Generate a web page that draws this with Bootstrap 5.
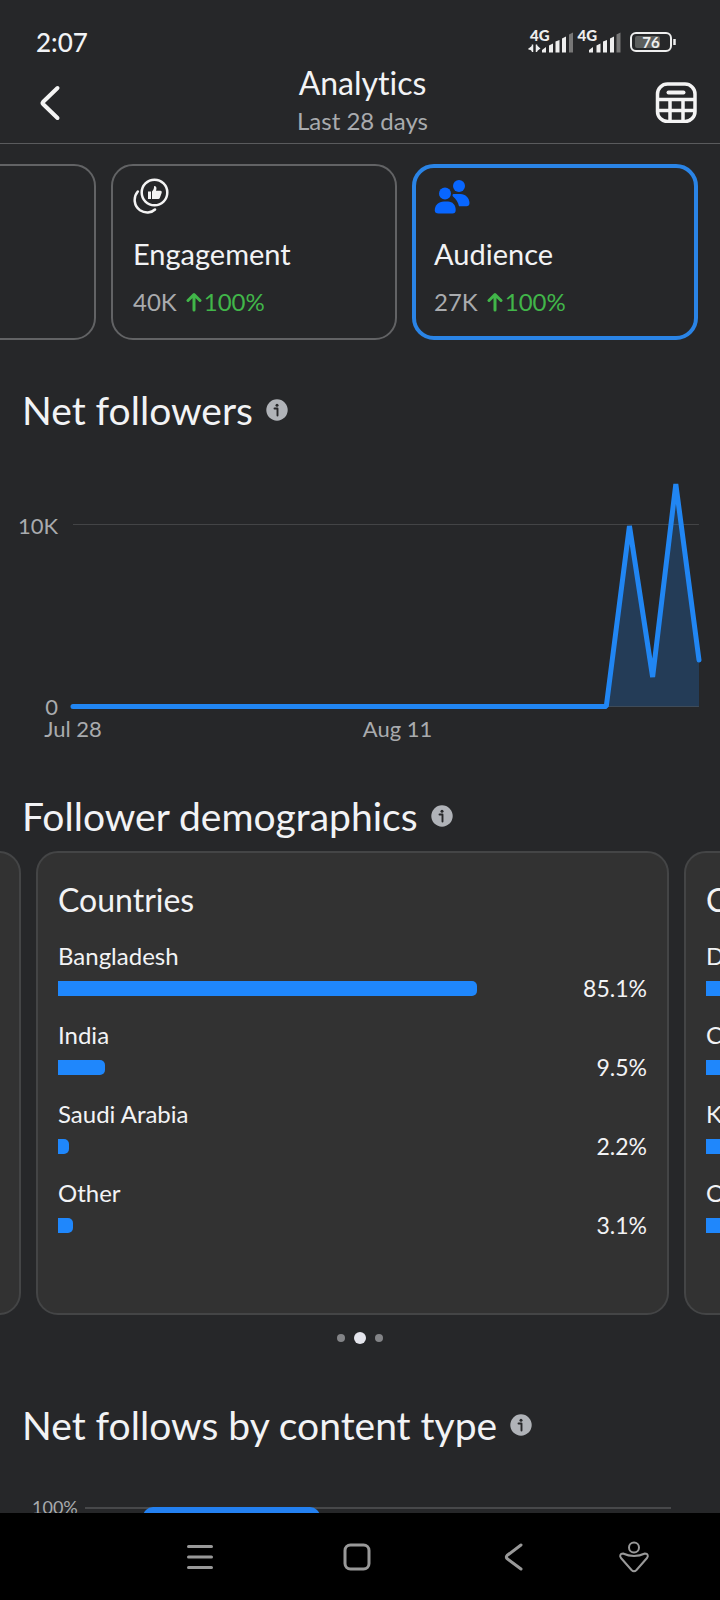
<!DOCTYPE html>
<html lang="en">
<head>
<meta charset="utf-8">
<meta name="viewport" content="width=device-width, initial-scale=1">
<title>Analytics</title>
<link href="https://cdn.jsdelivr.net/npm/bootstrap@5.3.0/dist/css/bootstrap.min.css" rel="stylesheet">
<style>
  body { background: #262729; color: #f2f3f5; font-family: Lato, "Noto Sans", sans-serif; font-variant-ligatures: none; }
  button { background: none; border: 0; padding: 0; color: inherit; text-align: left; }
  svg { display: block; }
  .muted { color: #a9abae; }
  .status-bar { height: 64px; padding: 20px 44px 0 36px; }
  .clock { font-size: 26px; line-height: 44px; font-weight: 500; }
  .app-header { display: grid; grid-template-columns: 56px 1fr 56px; padding: 0 23px 3px 28px; border-bottom: 1px solid #5a5b5d; }
  .app-title { font-size: 32px; line-height: 38px; }
  .app-sub { font-size: 24px; line-height: 38px; }

  .metric-strip { padding: 20px 22px 0 0; gap: 15px; overflow: hidden; }
  .metric { flex: 0 0 286px; min-height: 176px; border: 2px solid #626365; border-radius: 22px; padding: 12px 20px 20px; }
  .metric.active { border: 4px solid #2a84e6; padding: 10px 18px 18px; }
  .metric-name { font-size: 29px; line-height: 36px; margin-top: 22px; }
  .metric-value { font-size: 24px; line-height: 32px; margin-top: 14px; gap: 9px; }
  .up { color: #41b649; gap: 2px; }

  .section-title { font-size: 39px; line-height: 40px; font-weight: 400; margin: 0; }
  .section-head { padding: 50px 0 0 22px; gap: 13px; }
  .section-head.roomy { padding-top: 56px; }
  .section-head.roomier { padding-top: 61px; }
  .axis-text { font-size: 22px; line-height: 22px; }
  .plot { margin-right: 21px; }
  .y-axis { width: 73px; padding: 45px 15px 0 0; height: 248px; }
  .x-axis { margin: -2px 21px 0 73px; }
  .tick { width: 0; white-space: nowrap; }

  .carousel-row { gap: 15px; margin-top: 15px; overflow: hidden; }
  .demo-card { flex: 0 0 calc(100% - 87px); background: #323232; border: 2px solid #444546; border-radius: 22px; padding: 29px 20px 71px; }
  .demo-card.previous { flex-basis: 60px; margin-left: -39px; }
  .demo-title { font-size: 32px; line-height: 36px; font-weight: 400; margin: 0 0 22px; }
  .demo-list { gap: 15px; padding-bottom: 1px; }
  .demo-label { font-size: 24px; line-height: 32px; }
  .demo-bar { height: 32px; }
  .demo-value { width: 97px; font-size: 23px; line-height: 32px; }
  .bar { height: 15px; background: #1f87fc; border-radius: 0 5px 5px 0; }
  .dots { height: 12px; margin-top: 17px; gap: 9px; }
  .dot { width: 8px; height: 8px; border-radius: 50%; background: #838487; }
  .dot.on { width: 12px; height: 12px; background: #e4e5ec; }

  .type-chart { padding: 0 49px 0 32px; margin-top: 50px; gap: 8px; }
  .type-label { font-size: 18px; line-height: 24px; width: 45px; }
  .type-plot { border-top: 2px solid #47484a; margin-top: 12px; height: 240px; }
  .type-bar { width: 177px; height: 240px; margin: -2px 0 0 58px; border-radius: 10px 10px 0 0; background: #2380f0; }
  .system-nav { background: #000; height: 87px; position: relative; z-index: 1; padding: 0 70px 0 184px; }
  .nav-keys { gap: 125px; }
</style>
</head>
<body>
<svg width="0" height="0" class="position-absolute" aria-hidden="true">
  <symbol id="info" viewBox="0 0 22 22"><circle cx="11" cy="11" r="10.700" fill="#b0b3b8"/><circle cx="11" cy="6.200" r="1.500" fill="#262729"/><path d="M8.500 9.500h3V16.500" fill="none" stroke="#262729" stroke-width="1.900" stroke-linecap="round" stroke-linejoin="round"/></symbol>
  <symbol id="arrow" viewBox="0 0 16 20"><path d="M8 18V3M2 8.500L8 2.500l6 6" fill="none" stroke="#41b649" stroke-width="3" stroke-linecap="round" stroke-linejoin="round"/></symbol>
</svg>

<div class="vh-100 d-flex flex-column overflow-hidden">
  <div class="status-bar d-flex justify-content-between align-items-center flex-shrink-0">
    <div class="clock">2:07</div>
    <svg width="150" height="32" viewBox="526 26 150 32" role="img" aria-label="Signal and battery" font-family="Lato, sans-serif">
      <g fill="#eee">
        <text x="530" y="41" font-size="15" font-weight="900">4G</text>
        <path d="M528.500 49h4zM532.500 44.500v7.500M536.500 44.500v7.500" stroke="#eee" stroke-width="1.500"/>
        <path d="M528.500 48.500l4-3v6zM536.500 45l4 3.500-4 3zM542 52.500v-2.500l4-3v5.500zM549 52.500v-7l4-2v9zM555.500 52.500v-11l4-1.500v12.500zM562 52.500v-14l4-2v16z"/>
        <path fill="#777" d="M569 52.500v-18l4-2v20z"/>
        <text x="577.500" y="41" font-size="15" font-weight="900">4G</text>
        <path d="M589 52.500v-2.500l4-3v5.500zM596.500 52.500v-7l4-2v9zM603 52.500v-11l4-1.500v12.500zM610 52.500v-14l4-2v16z"/>
        <path fill="#777" d="M616.500 52.500v-18l4-2v20z"/>
      </g>
      <rect x="631" y="33" width="40" height="18" rx="5" fill="none" stroke="#eee" stroke-width="2"/>
      <rect x="635" y="36" width="25" height="12" rx="2" fill="#5c5e5d"/>
      <path d="M674.500 39v6" stroke="#eee" stroke-width="2.500"/>
      <text x="651" y="47.500" font-size="15" font-weight="700" fill="#eee" text-anchor="middle">76</text>
    </svg>
  </div>

  <header class="app-header flex-shrink-0">
    <button type="button" aria-label="Back" class="d-flex align-items-center">
      <svg width="44" height="44" viewBox="0 0 44 44"><path d="M29.500 8L15 22a1.500 1.500 0 0 0 0 2L29.500 38" fill="none" stroke="#f4f4f4" stroke-width="4" stroke-linecap="round"/></svg>
    </button>
    <div class="text-center">
      <div class="app-title">Analytics</div>
      <div class="app-sub muted">Last 28 days</div>
    </div>
    <button type="button" aria-label="Choose date range" class="d-flex align-items-center justify-content-end">
      <svg width="42" height="42" viewBox="0 0 42 42" fill="none" stroke="#f4f4f4"><rect x="2.500" y="3" width="37.500" height="37.500" rx="10" stroke-width="3.500"/><path d="M13.500 11.500h15" stroke-width="4" stroke-linecap="round"/><path d="M2 18.500h38M2 29.500h38M15 18.500V40M28 18.500V40" stroke-width="3.500"/></svg>
    </button>
  </header>

  <main class="flex-grow-1 overflow-hidden">
    <div class="metric-strip d-flex justify-content-end">
      <div class="metric"></div>
      <button type="button" class="metric">
        <svg width="36" height="36" viewBox="0 0 36 36"><circle cx="21.500" cy="14.500" r="12.800" fill="none" stroke="#f4f4f4" stroke-width="2.500"/><path d="M4.800 13.500C-.2 19.500 1 28 7 32.200C12 35.500 18.500 35 22 31.500" fill="none" stroke="#f4f4f4" stroke-width="2.500" stroke-linecap="round"/><path fill="#f4f4f4" d="M15 13.500h3v7.500h-3zM19 13.500c1.700-1.500 2-3.500 2.200-5.500 2.300 0 2.800 2.300 1.800 4.800h4.300c1.500 0 1.700 1.400 1.200 2.500l-1.600 4.500c-.3.800-.9 1.200-1.700 1.200H19z"/></svg>
        <div class="metric-name">Engagement</div>
        <div class="metric-value d-flex"><span class="muted">40K</span><span class="up d-flex align-items-center"><svg width="16" height="20"><use href="#arrow"/></svg>100%</span></div>
      </button>
      <button type="button" class="metric active">
        <svg width="36" height="36" viewBox="0 0 36 36" fill="#0866ff"><circle cx="25" cy="8" r="6"/><path d="M19.500 16h7c5 0 9 4 9 9 0 2.300-1.200 3.200-3 3.200H25c-1-4-3-7.500-6-9.700-.8-1-.6-2.500.5-2.500z"/><circle cx="11" cy="15.500" r="6"/><path d="M10 23.500h4c4.500 0 7.700 3.500 7.700 8.500 0 2.500-1.200 3.500-3.200 3.500H4.500C2 35.500.8 34.300.8 32.200.8 27 4.500 23.500 10 23.500z"/></svg>
        <div class="metric-name">Audience</div>
        <div class="metric-value d-flex"><span class="muted">27K</span><span class="up d-flex align-items-center"><svg width="16" height="20"><use href="#arrow"/></svg>100%</span></div>
      </button>
    </div>

    <section>
      <div class="section-head d-flex align-items-center">
        <h2 class="section-title">Net followers</h2>
        <button type="button" aria-label="About net followers"><svg width="22" height="22"><use href="#info"/></svg></button>
      </div>
      <div class="d-flex plot mt-4 pt-3">
        <div class="y-axis axis-text muted text-end d-flex flex-column justify-content-between flex-shrink-0"><span>10K</span><span>0</span></div>
        <!-- One unit of x is one day of the 28-day range -->
        <svg class="flex-grow-1 overflow-visible" height="250" viewBox="0 0 27 250" preserveAspectRatio="none" width="100" role="img" aria-label="Net followers by day">
          <path d="M0 54.500H27M0 236.500H27" stroke="#434446" stroke-width="1" vector-effect="non-scaling-stroke"/>
          <path d="M23 236.500L24 56 25 207 26 14 27 190V236.500z" fill="#1f87fc" fill-opacity=".22"/>
          <path d="M0 236.500H23L24 56 25 207 26 14 27 190" fill="none" stroke="#2186f3" stroke-width="5" stroke-linecap="round" stroke-linejoin="bevel" vector-effect="non-scaling-stroke"/>
        </svg>
      </div>
      <div class="x-axis axis-text muted d-flex">
        <span class="tick d-flex justify-content-center">Jul 28</span>
        <span class="tick d-flex justify-content-center" style="margin-left:51.85%">Aug 11</span>
      </div>
    </section>

    <section>
      <div class="section-head roomy d-flex align-items-center">
        <h2 class="section-title">Follower demographics</h2>
        <button type="button" aria-label="About follower demographics"><svg width="22" height="22"><use href="#info"/></svg></button>
      </div>
      <div class="carousel-row d-flex">
        <div class="demo-card previous"></div>
        <article class="demo-card">
          <h3 class="demo-title">Countries</h3>
          <div class="demo-list d-flex flex-column">
            <div><div class="demo-label">Bangladesh</div><div class="demo-bar d-flex align-items-center"><div class="flex-grow-1"><div class="bar" style="width:85.1%"></div></div><div class="demo-value text-end">85.1%</div></div></div>
            <div><div class="demo-label">India</div><div class="demo-bar d-flex align-items-center"><div class="flex-grow-1"><div class="bar" style="width:9.5%"></div></div><div class="demo-value text-end">9.5%</div></div></div>
            <div><div class="demo-label">Saudi Arabia</div><div class="demo-bar d-flex align-items-center"><div class="flex-grow-1"><div class="bar" style="width:2.2%"></div></div><div class="demo-value text-end">2.2%</div></div></div>
            <div><div class="demo-label">Other</div><div class="demo-bar d-flex align-items-center"><div class="flex-grow-1"><div class="bar" style="width:3.1%"></div></div><div class="demo-value text-end">3.1%</div></div></div>
          </div>
        </article>
        <article class="demo-card">
          <h3 class="demo-title">C</h3>
          <div class="demo-list d-flex flex-column">
            <div><div class="demo-label">D</div><div class="demo-bar d-flex align-items-center"><div class="bar w-50"></div></div></div>
            <div><div class="demo-label">C</div><div class="demo-bar d-flex align-items-center"><div class="bar w-50"></div></div></div>
            <div><div class="demo-label">K</div><div class="demo-bar d-flex align-items-center"><div class="bar w-50"></div></div></div>
            <div><div class="demo-label">O</div><div class="demo-bar d-flex align-items-center"><div class="bar w-50"></div></div></div>
          </div>
        </article>
      </div>
      <div class="dots d-flex justify-content-center align-items-center"><span class="dot"></span><span class="dot on"></span><span class="dot"></span></div>
    </section>

    <section>
      <div class="section-head roomier d-flex align-items-center">
        <h2 class="section-title">Net follows by content type</h2>
        <button type="button" aria-label="About net follows by content type"><svg width="22" height="22"><use href="#info"/></svg></button>
      </div>
      <div class="type-chart d-flex">
        <span class="type-label muted text-end">100%</span>
        <div class="type-plot flex-grow-1"><div class="type-bar"></div></div>
      </div>
    </section>
  </main>

  <nav class="system-nav d-flex align-items-center justify-content-between flex-shrink-0" aria-label="System">
    <div class="nav-keys d-flex">
      <button type="button" aria-label="Recent apps"><svg width="32" height="32" viewBox="0 0 32 32"><path d="M4.500 5.500h23M4.500 16h23M4.500 26.500h23" stroke="#999" stroke-width="3" stroke-linecap="round"/></svg></button>
      <button type="button" aria-label="Home"><svg width="32" height="32" viewBox="0 0 32 32"><rect x="4" y="4" width="24" height="24" rx="5.500" fill="none" stroke="#999" stroke-width="3"/></svg></button>
      <button type="button" aria-label="System back"><svg width="32" height="32" viewBox="0 0 32 32"><path d="M23 4L9 14.500a2 2 0 0 0 0 3L23 28" fill="none" stroke="#999" stroke-width="3" stroke-linecap="round"/></svg></button>
    </div>
    <button type="button" aria-label="Accessibility"><svg width="32" height="32" viewBox="0 0 32 32" fill="none" stroke="#999" stroke-width="2"><circle cx="16" cy="6.500" r="5"/><path d="M5 12.500q11 5 22 0c3 0 3.500 2.500 2 4.500L18.500 29q-2.500 2.500-5 0L3 17c-1.500-2-1-4.500 2-4.500z"/></svg></button>
  </nav>
</div>
<script src="https://cdn.jsdelivr.net/npm/bootstrap@5.3.0/dist/js/bootstrap.bundle.min.js"></script>
</body>
</html>
